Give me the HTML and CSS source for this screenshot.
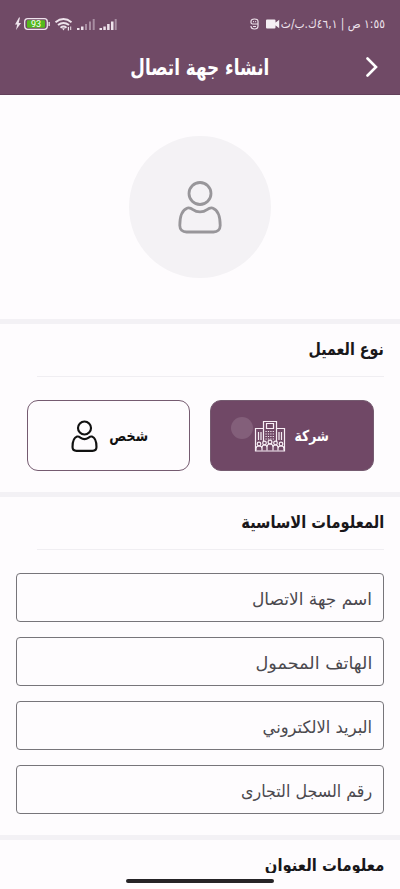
FILE: index.html
```html
<!DOCTYPE html>
<html lang="ar" dir="rtl">
<head>
<meta charset="utf-8">
<meta name="viewport" content="width=device-width, initial-scale=1">
<title>انشاء جهة اتصال</title>
<link rel="stylesheet" href="styles.css">
</head>
<body>
<svg class="defs" aria-hidden="true">
  <symbol id="person" viewBox="0 0 44 54">
    <circle cx="22" cy="13.5" r="11"/>
    <path d="M9.500 28C4 30 1.800 38 1.800 45.500C1.800 49.500 4.500 52 8.500 52H35.500C39.500 52 42.200 49.500 42.200 45.500C42.200 38 40 30 34.500 28C32.300 27.300 30.500 28.500 29 29.700C25 32.700 19 32.700 15 29.700C13.500 28.500 11.700 27.300 9.500 28Z"/>
  </symbol>
</svg>
<header class="header">
  <div class="status">
    <span class="clock"><span class="fit fit-clock">١:٥٥ ص | ٤٦,١ك.ب/ث</span></span>
    <svg class="camera" viewBox="0 0 14 10"><path d="M0 1.500Q0 .5 1 .5H8.500Q9.500 .5 9.500 1.500V8.500Q9.500 9.500 8.500 9.500H1Q0 9.500 0 8.500ZM9 4L13.200 .8V9.200L9 6Z"/></svg>
    <svg class="badge" viewBox="0 0 9 12"><path d="M8 5.500V3.500C8 1.800 6.500 1 4.500 1S1 1.800 1 3.500V4.500Q1 6 2.500 6H8V8C8 10 6.500 11 4.500 11S1 10 1 8M3 3.700H3.900M5.200 3.700H6.100M3 8.500H6"/></svg>
    <svg class="device" viewBox="0 0 104 18">
      <path class="solid" d="M4 2.500L0 9.500H2.200L1 15L6 8H3.700L5 2.500Z"/>
      <rect class="line" x="9.700" y="3.700" width="22.600" height="10.600" rx="3"/>
      <rect class="charge" x="12" y="5.200" width="18" height="7.600" rx="1"/>
      <path class="solid" d="M33.500 7H34.800V11H33.500Z"/>
      <text x="21" y="12.200">93</text>
      <path class="wifi" d="M40.500 7.200Q48.500 .8 56.500 7.200M43 10.100Q48.500 5.800 54 10.100M45.500 12.700Q48.500 10.300 51.500 12.700"/>
      <path class="solid" d="M47 13.300H50L48.500 15.500ZM52.800 12H54V15.500H52.800ZM55.200 11.500H56.200V15H55.200Z"/>
      <path class="solid" d="M62 13H64.500V15H62ZM66 11.500H68.500V15H66ZM84.500 13H87V15H84.500ZM88.300 11.500H90.800V15H88.300ZM92.100 9H94.600V15H92.100ZM96 6.500H98.500V15H96Z"/>
      <path class="faint" d="M70 9H72V15H70ZM74 6.500H76V15H74ZM77.700 4H79.700V15H77.700ZM99.700 4H101.700V15H99.700Z"/>
    </svg>
  </div>
  <div class="appbar">
    <svg class="back" viewBox="0 0 12 20"><path d="M1.500 1.500L10 10L1.500 18.500"/></svg>
    <h1><span class="fit fit-title">انشاء جهة اتصال</span></h1>
  </div>
</header>
<main>
  <section class="photo">
    <div class="avatar"><svg class="person"><use href="#person"/></svg></div>
  </section>
  <section class="types">
    <h2><span class="fit fit-type">نوع العميل</span></h2>
    <div class="cards">
      <button class="card active">
        <span class="fit fit-company">شركة</span>
        <svg class="company" viewBox="0 0 32 32">
          <path d="M9.500 22V1.500H22.500V22M9.500 8.500H1.500V31H30.500V8.500H22.500M12.500 3.500H19.500V8.500H12.500ZM4.500 12V20M7 12V20M25 12V20M27.500 12V20"/>
          <path class="dots" d="M11.500 11.500H21M11.500 14H21M11.500 16.500H21M11.500 19H21"/>
          <path class="people" d="M2 30.500V28.500Q2 26 5 26T8 28.500V30.500M8 30.500V27.500Q8 25 10.500 25T13 27.500V30.500M13 30.500V27Q13 24 16 24T19 27V30.500M19 30.500V27.500Q19 25 21.500 25T24 27.500V30.500M24 30.500V28.500Q24 26 27 26T30 28.500V30.500"/>
          <g class="people"><circle cx="5" cy="24" r="1.800"/><circle cx="10.500" cy="23" r="1.800"/><circle cx="16" cy="22" r="1.900"/><circle cx="21.500" cy="23" r="1.800"/><circle cx="27" cy="24" r="1.800"/></g>
        </svg>
        <i class="touch"></i>
      </button>
      <button class="card">
        <span class="fit fit-person">شخص</span>
        <svg class="person" preserveAspectRatio="none"><use href="#person"/></svg>
      </button>
    </div>
  </section>
  <section class="basic">
    <h2><span class="fit fit-basic">المعلومات الاساسية</span></h2>
    <div class="fields">
      <div class="field"><span class="fit fit-name">اسم جهة الاتصال</span></div>
      <div class="field"><span class="fit fit-phone">الهاتف المحمول</span></div>
      <div class="field"><span class="fit fit-email">البريد الالكتروني</span></div>
      <div class="field"><span class="fit fit-record">رقم السجل التجارى</span></div>
    </div>
  </section>
  <section class="address">
    <h2><span class="fit fit-address">معلومات العنوان</span></h2>
  </section>
</main>
<footer class="navbar"><i></i></footer>
</body>
</html>
```
FILE: styles.css
```css
* { box-sizing: border-box; }
body {
  margin: 0;
  width: 400px;
  height: 889px;
  overflow: hidden;
  display: flex;
  flex-direction: column;
  background: #fefcfe;
  color: #19171a;
  font-family: "DejaVu Sans", sans-serif;
}
h1, h2 { margin: 0; }
svg { display: block; flex: none; }
.defs { position: absolute; width: 0; height: 0; }
.fit { display: block; width: max-content; white-space: nowrap; transform-origin: right center; }
.fit-clock { transform: scaleX(.89); }
.fit-title { transform: scaleX(.765); }
.fit-type { transform: scaleX(.84); }
.fit-company { transform: scaleX(.82); }
.fit-person { transform: scaleX(.84); }
.fit-basic { transform: scaleX(.86); }
.fit-name { transform: scaleX(1); }
.fit-phone { transform: scaleX(1.04); }
.fit-email { transform: scaleX(.96); }
.fit-record { transform: scaleX(.935); }
.fit-address { transform: scaleX(.87); }
.header { height: 95px; background: #704a66; border-bottom: 1px solid #62405a; color: #fff; flex: none; }
.status { height: 40px; padding: 8px 15px 0; display: flex; align-items: center; direction: rtl; }
.clock { width: 105px; font-size: 12px; color: #eee3ec; }
.camera { width: 14px; height: 10px; fill: #f5eff4; }
.badge { width: 9px; height: 12px; margin-right: 7px; fill: none; stroke: #eee3ec; stroke-width: 1.200; }
.device { width: 104px; height: 18px; margin-right: auto; }
.solid { fill: #eee3ec; }
.faint { fill: #a78da1; }
.line { fill: none; stroke: #eee3ec; stroke-width: 1.300; }
.charge { fill: #55b91b; }
.device text { font: 9px Roboto, sans-serif; fill: #fff; text-anchor: middle; direction: ltr; }
.wifi { fill: none; stroke: #eee3ec; stroke-width: 1.900; }
.appbar { height: 54px; display: grid; grid-template-columns: 40px 1fr 40px; align-items: center; }
.back { width: 12px; height: 20px; margin-right: 22px; fill: none; stroke: #fff; stroke-width: 2.600; stroke-linecap: round; }
h1 { display: flex; justify-content: center; padding-top: 1px; font-size: 22px; line-height: 30px; }
h1 .fit { transform-origin: center; }
main { flex: 1; min-height: 0; overflow: hidden; }
.photo { height: 224px; padding-top: 41px; }
.avatar { width: 142px; height: 142px; margin: 0 auto; border-radius: 50%; background: #f4f2f5; display: flex; align-items: center; justify-content: center; }
.person { fill: none; stroke: currentColor; stroke-width: 2.800; }
.avatar .person { width: 44px; height: 54px; color: #98969a; }
.types, .basic, .address { border-top: 5px solid #f3f1f5; }
.types { height: 173px; }
.basic { height: 343px; }
h2 { height: 53px; margin: 0 16px 0 37px; border-bottom: 1px solid #f0eef2; padding-top: 11px; font-size: 17px; line-height: 29px; }
.cards { display: flex; gap: 20px; padding: 23px 26.500px 0; }
.card { position: relative; width: 163.500px; height: 71px; padding: 0; border: 1px solid #755b70; border-radius: 11px; background: transparent; color: #111; font: bold 15px "DejaVu Sans", sans-serif; display: flex; align-items: center; justify-content: flex-start; }
.card.active { background: #704866; color: #fff; }
.card .fit { margin-right: 44px; }
.card .fit-person { margin-right: 41px; }
.card .person, .company { position: absolute; }
.card .person { width: 27px; height: 32px; left: 43px; top: 19px; stroke-width: 3.600; }
.company { width: 32px; height: 32px; left: 43px; top: 19px; fill: none; stroke: #f7eef5; stroke-width: 1.200; }
.dots { stroke-dasharray: 1.200 1.200; }
.touch { position: absolute; width: 22px; height: 22px; left: 20px; top: 16px; border-radius: 50%; background: #835f7a; }
.fields { padding: 23px 16px 0; display: grid; gap: 15px; }
.field { height: 49px; border: 1px solid #77757a; border-radius: 4px; padding: 2px 11px 0 0; display: flex; align-items: center; font-size: 17px; color: #4b494e; }
.address { height: 38px; overflow: hidden; }
.navbar { height: 16px; flex: none; display: flex; justify-content: center; padding-top: 6px; }
.navbar i { width: 148px; height: 4px; border-radius: 2px; background: #262427; }
```
